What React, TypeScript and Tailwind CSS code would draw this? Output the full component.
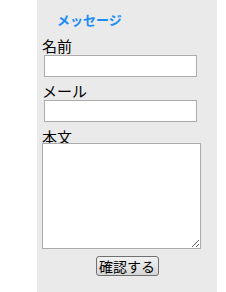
export default function App() {
  const font = { fontFamily: '"MS UI Gothic", "Noto Sans CJK JP", sans-serif' };
  return (
    <div className="w-[226px] h-[292px] bg-white" style={font}>
      <div className="ml-[37px] w-[180px] h-[292px] bg-[#eaeaea] pl-[5px] flex flex-col">
        <div className="h-[37px] pt-[12px] pl-[15px] text-[13px] leading-[16px] font-bold text-[#1a8cf5]">
          メッセージ
        </div>
        <div className="h-[17px] text-[15px] leading-[17px] text-black">名前</div>
        <input className="mt-[1px] ml-[2px] h-[22px] w-[153px] border border-[#ababab] bg-white" />
        <div className="mt-[5px] h-[17px] text-[15px] leading-[17px] text-black">メール</div>
        <input className="mt-[1px] ml-[2px] h-[22px] w-[153px] border border-[#ababab] bg-white" />
        <div className="mt-[6px] h-[15px] text-[15px] leading-[17px] text-black">本文</div>
        <textarea className="h-[106px] w-[159px] border border-[#ababab] bg-white resize" />
        <div className="mt-[7px] flex justify-center pr-[5px]">
          <button className="h-[20px] w-[63px] rounded-[3px] border border-[#707070] bg-gradient-to-b from-[#f2f2f2] to-[#d6d6d6] text-[14px] leading-[18px] text-black">
            確認する
          </button>
        </div>
      </div>
    </div>
  );
}
